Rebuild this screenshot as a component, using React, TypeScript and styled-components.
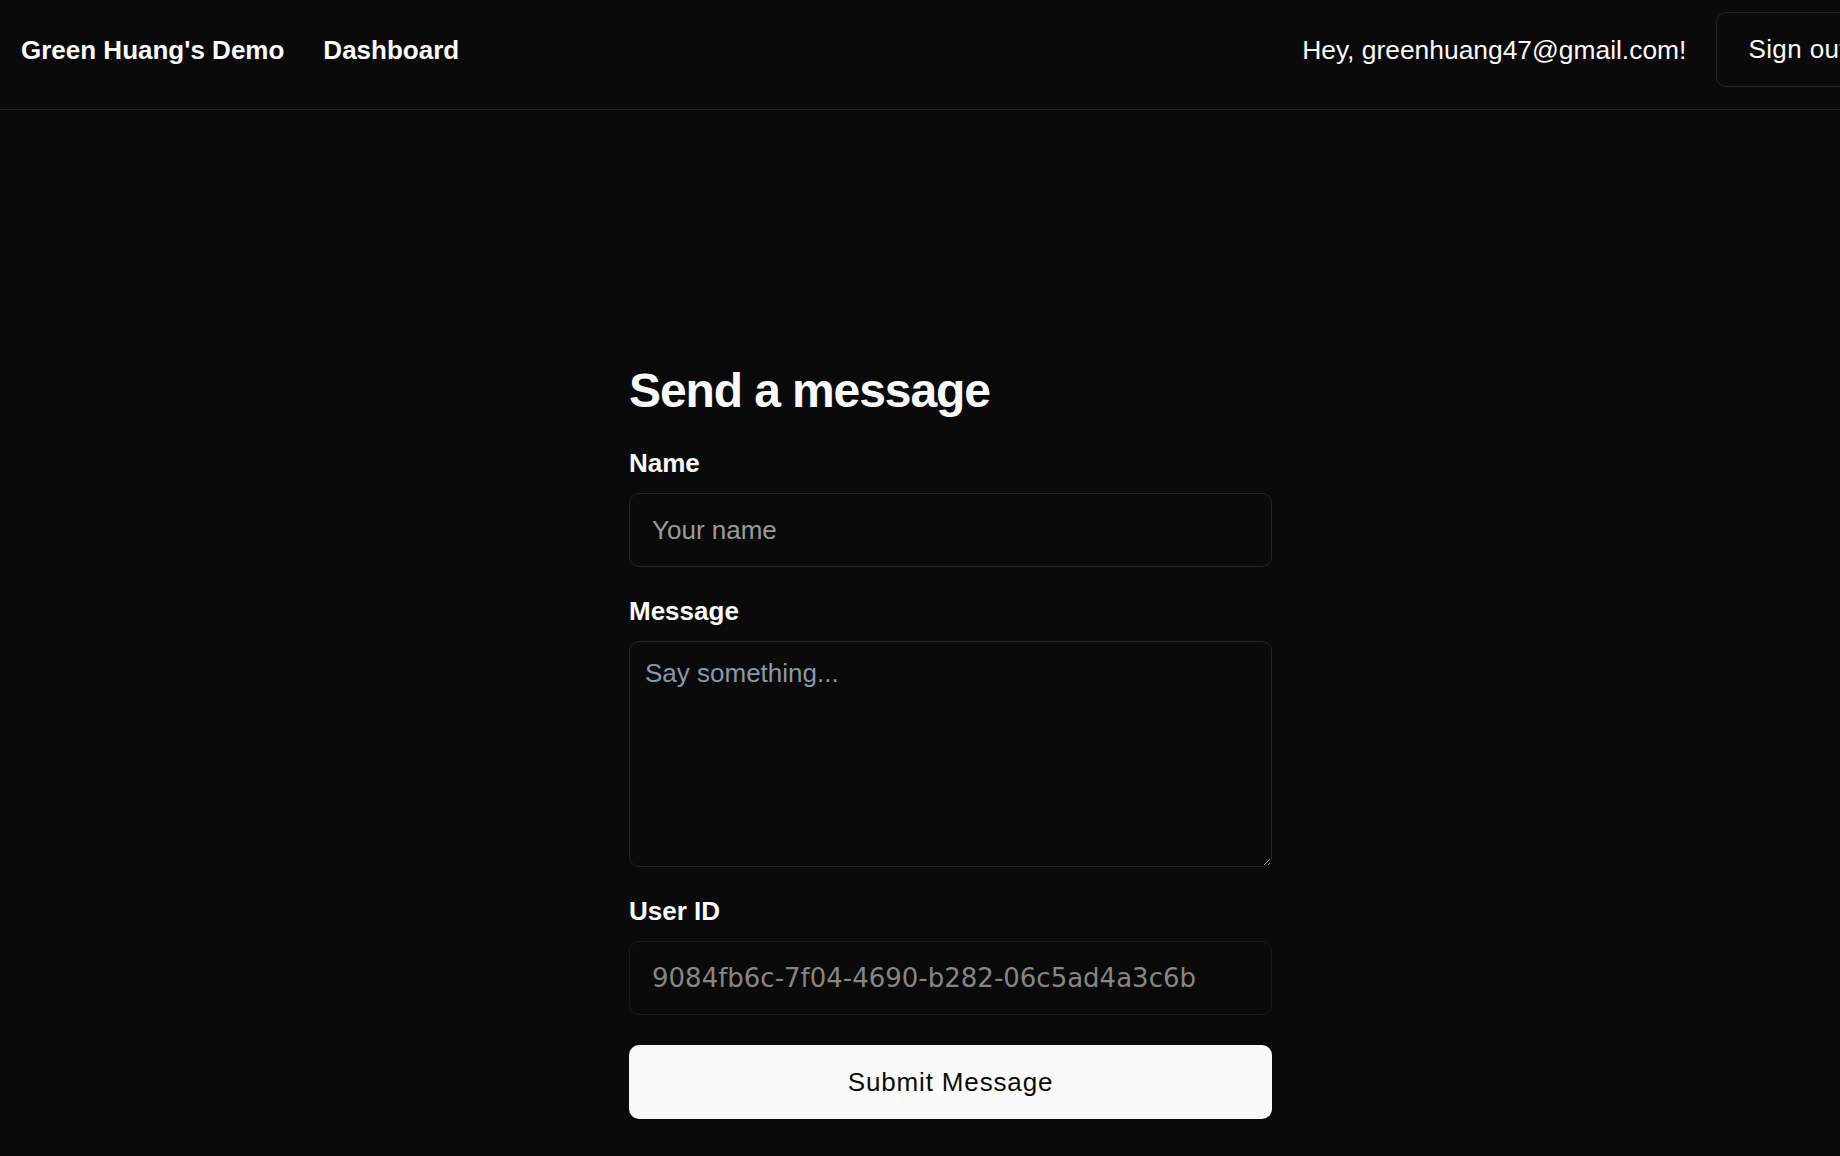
import { createGlobalStyle } from 'styled-components';
import styled from 'styled-components';

const GlobalStyle = createGlobalStyle`
  html, body {
    margin: 0;
    padding: 0;
    background: #0a0a0a;
    overflow: hidden;
  }

  body {
    font-family: 'Liberation Sans', Arial, sans-serif;
    color: #fafafa;
  }

  * {
    box-sizing: border-box;
  }
`;

// la página es más ancha que la ventana, por eso el botón queda cortado
const Page = styled.div`
  width: 1901px;
  min-height: 1156px;
  background: #0a0a0a;
`;

const Header = styled.header`
  display: flex;
  align-items: center;
  justify-content: space-between;
  height: 110px;
  padding: 12px 21px 22px 21px;
  border-bottom: 1px solid #262626;
`;

const NavGroup = styled.div<{ $gap: number }>`
  display: flex;
  align-items: center;
  gap: ${(p) => p.$gap}px;
  height: 100%;
`;

const NavLink = styled.a`
  font-size: 26px;
  font-weight: 700;
  line-height: 30px;
  color: #fafafa;
  text-decoration: none;
  cursor: pointer;
`;

const Greeting = styled.span`
  font-size: 26.4px;
  line-height: 30px;
  color: #fafafa;
`;

const SignOut = styled.button`
  height: 100%;
  padding: 0 32px 0 31px;
  border: 1px solid #262626;
  border-radius: 10px;
  background: #0a0a0a;
  color: #fafafa;
  font-family: inherit;
  font-size: 26px;
  font-weight: 500;
  letter-spacing: 0.4px;
  white-space: nowrap;
  cursor: pointer;
`;

const Main = styled.main`
  padding-top: 253px;
`;

const Form = styled.form`
  display: flex;
  flex-direction: column;
  gap: 29px;
  width: 643px;
  margin: 0 auto;
`;

const Title = styled.h1`
  margin: 0;
  font-size: 48px;
  line-height: 56px;
  font-weight: 700;
  letter-spacing: -1.1px;
  color: #fafafa;
`;

const Field = styled.div`
  display: flex;
  flex-direction: column;
  gap: 15px;
`;

const Label = styled.label`
  font-size: 26px;
  line-height: 30px;
  font-weight: 700;
  color: #fafafa;
`;

const Input = styled.input<{ $locked?: boolean }>`
  display: block;
  width: 100%;
  height: 74px;
  padding: 0 22px;
  border: 1px solid ${(p) => (p.$locked ? '#1a1a1a' : '#262626')};
  border-radius: 10px;
  background: #0a0a0a;
  color: ${(p) => (p.$locked ? '#868686' : '#fafafa')};
  font-family: ${(p) =>
    p.$locked ? "'DejaVu Sans', sans-serif" : "'Liberation Sans', Arial, sans-serif"};
  font-size: 26px;
  outline: none;

  &::placeholder {
    color: #9a9a9a;
  }
`;

const TextArea = styled.textarea`
  display: block;
  width: 100%;
  height: 226px;
  padding: 16px 15px;
  border: 1px solid #262626;
  border-radius: 10px;
  background: #0a0a0a;
  color: #fafafa;
  color-scheme: dark;
  font-family: 'Liberation Sans', Arial, sans-serif;
  font-size: 26px;
  line-height: 30px;
  resize: vertical;
  outline: none;

  &::placeholder {
    color: #8b97a8;
  }
`;

const Submit = styled.button`
  height: 74px;
  margin-top: 1px;
  border: none;
  border-radius: 10px;
  background: #fafafa;
  color: #0a0a0a;
  font-family: 'Liberation Sans', Arial, sans-serif;
  font-size: 26px;
  font-weight: 500;
  letter-spacing: 0.85px;
  cursor: pointer;
`;

export default function App() {
  const userId = '9084fb6c-7f04-4690-b282-06c5ad4a3c6b';

  return (
    <Page>
      <GlobalStyle />
      <Header>
        <NavGroup $gap={39}>
          <NavLink>Green Huang's Demo</NavLink>
          <NavLink>Dashboard</NavLink>
        </NavGroup>
        <NavGroup $gap={30}>
          <Greeting>Hey, greenhuang47@gmail.com!</Greeting>
          <SignOut type="button">Sign out</SignOut>
        </NavGroup>
      </Header>

      <Main>
        <Form onSubmit={(e) => e.preventDefault()}>
          <Title>Send a message</Title>

          <Field>
            <Label htmlFor="name">Name</Label>
            <Input id="name" placeholder="Your name" />
          </Field>

          <Field>
            <Label htmlFor="message">Message</Label>
            <TextArea id="message" placeholder="Say something..." />
          </Field>

          <Field>
            <Label htmlFor="user-id">User ID</Label>
            <Input id="user-id" $locked readOnly value={userId} />
          </Field>

          <Submit type="submit">Submit Message</Submit>
        </Form>
      </Main>
    </Page>
  );
}
